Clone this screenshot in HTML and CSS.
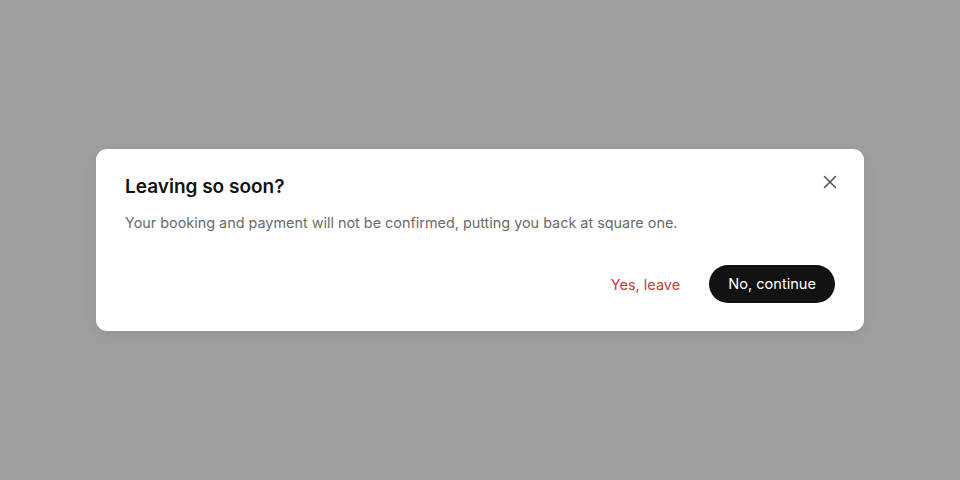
FILE: index.html
```html
<!DOCTYPE html>
<html lang="en">
<head>
<meta charset="utf-8">
<link rel="stylesheet" href="styles.css">
</head>
<body>
<div class="backdrop">
  <div class="modal" role="dialog">
    <button class="close" aria-label="Close">
      <svg width="24" height="24" viewBox="0 0 24 24" fill="none" stroke="currentColor" stroke-width="1.6" stroke-linecap="round"><path d="M6.5 6.5l11 11M17.5 6.5l-11 11"/></svg>
    </button>
    <h2 class="title">Leaving so soon?</h2>
    <p class="text">Your booking and payment will not be confirmed, putting you back at square one.</p>
    <div class="actions">
      <button class="btn-leave">Yes, leave</button>
      <button class="btn-continue">No, continue</button>
    </div>
  </div>
</div>
</body>
</html>
```
FILE: styles.css
```css
* { box-sizing: border-box; }
html, body { margin: 0; height: 100%; }
body {
  font-family: Inter, "Noto Sans", sans-serif;
  background: #9f9f9f;
}
.backdrop {
  height: 480px;
  display: flex;
  align-items: center;
  justify-content: center;
}
.modal {
  position: relative;
  width: 768px;
  background: #fff;
  border-radius: 11px;
  padding: 24px 29px 28px 29px;
  box-shadow: 0 4px 14px rgba(0,0,0,0.08);
}
.close {
  position: absolute;
  top: 21px;
  right: 22px;
  width: 24px;
  height: 24px;
  padding: 0;
  border: 0;
  background: none;
  color: #4b5563;
  display: flex;
}
.title {
  margin: 0;
  font-size: 19px;
  line-height: 28px;
  font-weight: 600;
  color: #111111;
}
.text {
  margin: 10px 0 0 0;
  font-size: 14.4px;
  line-height: 24px;
  color: #6b6b6b;
}
.actions {
  margin-top: 30px;
  display: flex;
  justify-content: flex-end;
  align-items: center;
  gap: 29px;
}
.btn-leave {
  border: 0;
  background: none;
  padding: 0;
  font-family: inherit;
  font-size: 14.5px;
  color: #c93a3a;
  height: 38px;
}
.btn-continue {
  border: 0;
  background: #121212;
  color: #fff;
  font-family: inherit;
  font-size: 14.6px;
  font-weight: 400;
  height: 38px;
  padding: 0 19px;
  border-radius: 19px;
}
```
